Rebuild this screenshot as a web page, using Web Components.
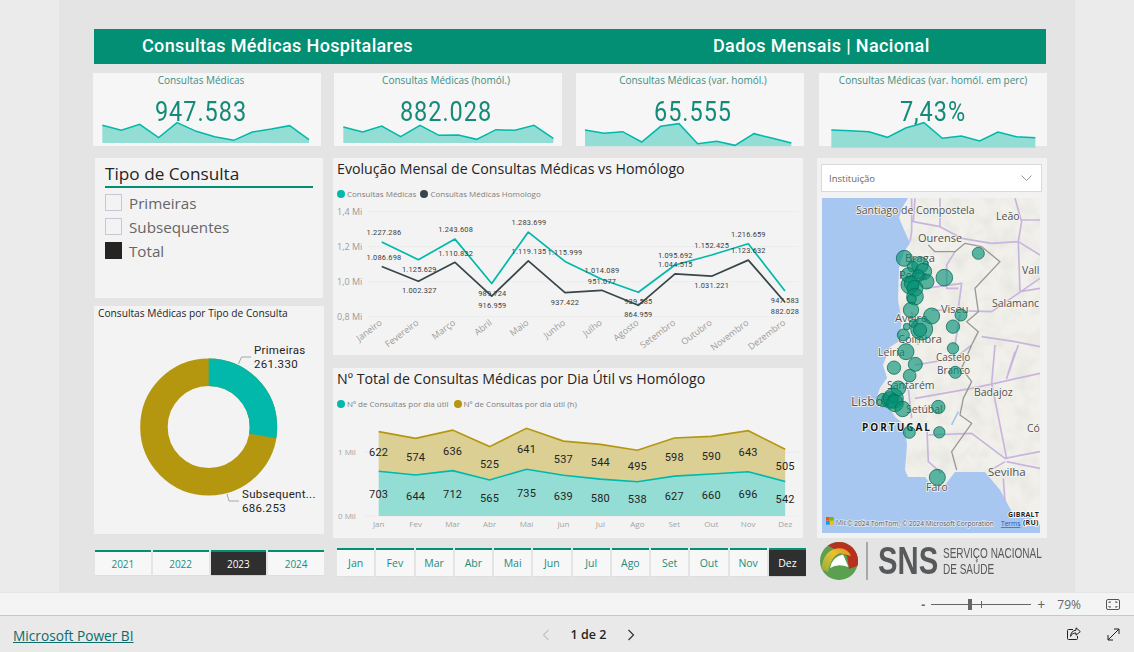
<!DOCTYPE html>
<html lang="pt">
<head>
<meta charset="utf-8">
<title>Consultas Médicas Hospitalares</title>
<style>
  html, body { margin: 0; padding: 0; background: #e9e9e9; }
  body { width: 1134px; height: 652px; overflow: hidden; font-family: "Open Sans", "Liberation Sans", sans-serif; }
</style>
</head>
<body>
<report-page>
  <report-header slot="header" left="Consultas Médicas Hospitalares" right="Dados Mensais | Nacional"></report-header>

  <kpi-card slot="kpi" value="947.583" left="10" bottom="368" shift="-6"
    spark="38,315 95,330 150,312 207,352 262,307 320,333 375,349 432,360 488,335 545,326 600,316 658,358">Consultas Médicas</kpi-card>
  <kpi-card slot="kpi" value="882.028" left="732" bottom="368" shift="-2"
    spark="760,320 818,335 875,317 932,349 990,315 1047,345 1105,344 1160,357 1218,328 1275,330 1332,315 1390,354">Consultas Médicas (homól.)</kpi-card>
  <kpi-card slot="kpi" value="65.555" left="18" bottom="378" shift="3"
    spark="45,329 102,339 158,334 215,365 272,318 327,310 383,370 440,363 495,375 552,340 608,354 664,368">Consultas Médicas (var. homól.)</kpi-card>
  <kpi-card slot="kpi" value="7,43%" left="748" bottom="382" shift="0"
    spark="785,329 842,331 898,334 953,351 1008,323 1063,307 1118,354 1175,347 1230,362 1285,335 1340,349 1397,352">Consultas Médicas (var. homól. em perc)</kpi-card>

  <type-slicer slot="left" items="Primeiras,Subsequentes,Total" active="Total">Tipo de Consulta</type-slicer>
  <donut-card slot="left">Consultas Médicas por Tipo de Consulta</donut-card>
  <button-slicer slot="left" items="2021,2022,2023,2024" active="2023" kind="year"></button-slicer>

  <line-card slot="middle">Evolução Mensal de Consultas Médicas vs Homólogo</line-card>
  <area-card slot="middle">Nº Total de Consultas Médicas por Dia Útil vs Homólogo</area-card>
  <button-slicer slot="middle" items="Jan,Fev,Mar,Abr,Mai,Jun,Jul,Ago,Set,Out,Nov,Dez" active="Dez" kind="month"></button-slicer>

  <map-card slot="right"></map-card>
  <sns-logo slot="right"></sns-logo>
</report-page>
<zoom-bar></zoom-bar>
<report-footer></report-footer>

<script>
const TEAL = '#01b8aa';
const GOLD = '#b5960f';
const DARK = '#374649';
const TEXT_FONT = '"Open Sans", "Liberation Sans", sans-serif';
const DIN_FONT = 'Roboto, "Liberation Sans", sans-serif';

class ReportPage extends HTMLElement {
  constructor() {
    super();
    this.attachShadow({ mode: 'open' });
  }
  connectedCallback() {
    this.shadowRoot.innerHTML = `
      <style>
        :host { display: block; width: 1134px; height: 592px; background: #ebebeb; }
        .canvas { box-sizing: border-box; width: 1016px; height: 592px; margin-left: 59px; padding: 29px 0 0 34px; background: #e4e4e4; }
        .kpis { display: grid; grid-template-columns: 241px 242px 243px 228px; margin: 9px 0 0 0; }
        .main { display: grid; grid-template-columns: 239px 484px 230px; margin: 12px 0 0 1px; }
        .col { display: flex; flex-direction: column; }
      </style>
      <div class="canvas">
        <slot name="header"></slot>
        <div class="kpis"><slot name="kpi"></slot></div>
        <div class="main">
          <div class="col"><slot name="left"></slot></div>
          <div class="col"><slot name="middle"></slot></div>
          <div class="col"><slot name="right"></slot></div>
        </div>
      </div>`;
  }
}

class ReportHeader extends HTMLElement {
  constructor() {
    super();
    this.attachShadow({ mode: 'open' });
  }
  connectedCallback() {
    this.shadowRoot.innerHTML = `
      <style>
        :host { display: grid; grid-template-columns: 571px 1fr; align-items: center; box-sizing: border-box; width: 952px; height: 35px; margin-left: 1px; padding: 0 0 2px 48px; background: #028f74; color: #fff; font: 500 18px ${DIN_FONT}; letter-spacing: .35px; white-space: nowrap; }
      </style>
      <span>${this.getAttribute('left')}</span>
      <span>${this.getAttribute('right')}</span>`;
  }
}

class KpiCard extends HTMLElement {
  constructor() {
    super();
    this.attachShadow({ mode: 'open' });
  }
  connectedCallback() {
    const left = Number(this.getAttribute('left'));
    const bottom = this.getAttribute('bottom');
    const shift = Number(this.getAttribute('shift'));
    const pts = this.getAttribute('spark').split(' ');
    const first = pts[0].split(',')[0];
    const last = pts[pts.length - 1].split(',')[0];
    this.shadowRoot.innerHTML = `
      <style>
        :host { display: block; position: relative; width: 228px; height: 73px; background: #f6f6f6; text-align: center; }
        .label { height: 16px; font: 10px/15px ${TEXT_FONT}; color: #3c8f84; white-space: nowrap; position: relative; left: ${shift}px; }
        .value { margin-top: 8px; font: 400 27px/30px ${DIN_FONT}; letter-spacing: 1.1px; color: #158a78; position: relative; left: ${shift}px; transform: scaleX(.87); }
        svg { position: absolute; left: 0; top: 0; overflow: visible; }
      </style>
      <svg width="228" height="73" viewBox="${left} 158 684 219">
        <polygon points="${first},${bottom} ${pts.join(' ')} ${last},${bottom}" fill="#93ddd5"/>
        <polyline points="${pts.join(' ')}" fill="none" stroke="${TEAL}" stroke-width="4.5"/>
      </svg>
      <div class="label"><slot></slot></div>
      <div class="value">${this.getAttribute('value')}</div>`;
  }
}

class TypeSlicer extends HTMLElement {
  constructor() {
    super();
    this.attachShadow({ mode: 'open' });
  }
  connectedCallback() {
    const active = this.getAttribute('active');
    const rows = this.getAttribute('items').split(',').map(name => `
      <div class="row"><span class="box ${name === active ? 'on' : ''}"></span><span>${name}</span></div>`).join('');
    this.shadowRoot.innerHTML = `
      <style>
        :host { display: block; box-sizing: border-box; width: 228px; height: 140px; margin-left: 1px; padding: 5px 10px 0 10px; background: #f3f3f3; }
        .title { height: 23px; border-bottom: 2px solid #028f74; font: 17.2px/22px ${TEXT_FONT}; color: #252423; white-space: nowrap; }
        .rows { margin-top: 3px; }
        .row { display: flex; align-items: center; gap: 7px; height: 24px; font: 15.2px/24px ${TEXT_FONT}; color: #666; }
        .box { box-sizing: border-box; width: 17px; height: 17px; border: 1px solid #c8c8d4; background: #f3f3f3; margin-top: -2px; }
        .box.on { background: #252423; border-color: #252423; }
      </style>
      <div class="title"><slot></slot></div>
      <div class="rows">${rows}</div>`;
  }
}

class DonutCard extends HTMLElement {
  constructor() {
    super();
    this.attachShadow({ mode: 'open' });
  }
  connectedCallback() {
    const r = 54.75;
    const c = 2 * Math.PI * r;
    const part = c * 261330 / (261330 + 686253);
    this.shadowRoot.innerHTML = `
      <style>
        :host { display: block; width: 230px; height: 228px; margin-top: 8px; background: #f3f3f3; }
        .title { height: 16px; padding-left: 4px; font: 10.2px/14px ${TEXT_FONT}; color: #252423; white-space: nowrap; }
        svg { display: block; }
        text { font: 11.5px ${DIN_FONT}; letter-spacing: .3px; fill: #252423; }
      </style>
      <div class="title"><slot></slot></div>
      <svg width="230" height="212" viewBox="94 322 230 212">
        <circle cx="208.7" cy="427" r="${r}" fill="none" stroke="${GOLD}" stroke-width="27.5"/>
        <circle cx="208.7" cy="427" r="${r}" fill="none" stroke="${TEAL}" stroke-width="27.5"
          stroke-dasharray="${part} ${c - part}" transform="rotate(-90 208.7 427)"/>
        <polyline points="238.5,364 241.5,357 251,357" fill="none" stroke="#a6a6a6"/>
        <polyline points="227,494 229,501 239,501" fill="none" stroke="#a6a6a6"/>
        <text x="254" y="354">Primeiras</text>
        <text x="254" y="368">261.330</text>
        <text x="242" y="498">Subsequent...</text>
        <text x="242" y="512">686.253</text>
      </svg>`;
  }
}

class ButtonSlicer extends HTMLElement {
  constructor() {
    super();
    this.attachShadow({ mode: 'open' });
  }
  connectedCallback() {
    const active = this.getAttribute('active');
    const month = this.getAttribute('kind') === 'month';
    const items = this.getAttribute('items').split(',');
    const cells = items.map(name => `<div class="cell ${name === active ? 'on' : ''}">${name}</div>`).join('');
    this.shadowRoot.innerHTML = `
      <style>
        :host { display: grid; grid-template-columns: repeat(${items.length}, 1fr); column-gap: 2px;
          margin: ${month ? '10px 0 0 4px' : '16px 0 0 1px'}; width: ${month ? 469 : 229}px; height: ${month ? 29 : 26}px; }
        .cell { box-sizing: border-box; border-top: 2px solid #028f74; background: #f7f7f7; color: #1c8c7c; display: flex; align-items: center; justify-content: center; font: ${month ? 10.5 : 10}px ${TEXT_FONT}; border-bottom: 1px solid #dedede; }
        .cell.on { background: #2f2f2f; color: #fff; border-bottom-color: #cfcfcf; }
      </style>${cells}`;
  }
}

class LineCard extends HTMLElement {
  constructor() {
    super();
    this.attachShadow({ mode: 'open' });
  }
  connectedCallback() {
    const a = [1227286, 1125629, 1243608, 989724, 1283699, 1115999, 1014089, 939585, 1095692, 1152425, 1216659, 947583];
    const b = [1086698, 1002327, 1110832, 916959, 1119135, 937422, 951077, 864959, 1044515, 1031221, 1123632, 882028];
    const months = ['Janeiro', 'Fevereiro', 'Março', 'Abril', 'Maio', 'Junho', 'Julho', 'Agosto', 'Setembro', 'Outubro', 'Novembro', 'Dezembro'];
    // label centres read off the report, in 3x crop units
    const labelX = [162, 268, 377, 487, 597, 705, 816, 925, 1036, 1145, 1255, 1365];
    const labelA = [230, 340, 220, 412, 200, 289, 343, 436, 299, 269, 235, 433];
    const labelB = [305, 403, 292, 448, 286, 439, 376, 475, 326, 388, 284, 466];
    const x = i => 381.7 + i * 36.66;
    const y = v => 315.7 - (v - 800000) / 1000000 * 175;
    const line = s => s.map((v, i) => `${x(i).toFixed(1)},${y(v).toFixed(1)}`).join(' ');
    const fmt = v => String(v).replace(/\B(?=(\d{3})+$)/g, '.');
    const grid = [[210.7, '1,4 Mi'], [245.7, '1,2 Mi'], [280.7, '1,0 Mi'], [315.7, '0,8 Mi']].map(([gy, t]) => `
      <line x1="368" x2="799" y1="${gy}" y2="${gy}" stroke="#ececec"/>
      <text class="axis" x="337" y="${gy + 3.5}">${t}</text>`).join('');
    const labels = s => s.map((v, i) => `<text class="val" text-anchor="middle" x="${330 + labelX[i] / 3}" y="${155 + ((s === a ? labelA : labelB)[i] + 8) / 3}">${fmt(v)}</text>`).join('');
    const ticks = months.map((m, i) => `<text class="axis" text-anchor="end" transform="translate(${x(i) + 1} 323) rotate(-37)">${m}</text>`).join('');
    this.shadowRoot.innerHTML = `
      <style>
        :host { display: block; width: 470px; height: 197px; background: #f3f3f3; }
        .title { height: 22px; padding: 1px 0 0 4px; font: 14.2px/20px ${TEXT_FONT}; color: #252423; white-space: nowrap; }
        .legend { display: flex; align-items: center; height: 13px; margin: 6px 0 0 4px; font: 8px/13px ${TEXT_FONT}; color: #7f7f7f; white-space: nowrap; }
        .dot { width: 8px; height: 8px; border-radius: 50%; margin: 0 2px 0 0; }
        .legend span + .dot { margin-left: 4px; }
        svg { display: block; }
        .axis { font: 9px ${TEXT_FONT}; fill: #9c9c9c; }
        .val { font: 7.4px ${DIN_FONT}; letter-spacing: .2px; fill: #3d3d3d; }
      </style>
      <div class="title"><slot></slot></div>
      <div class="legend">
        <i class="dot" style="background:${TEAL}"></i><span>Consultas Médicas</span>
        <i class="dot" style="background:${DARK}"></i><span>Consultas Médicas Homologo</span>
      </div>
      <svg width="470" height="156" viewBox="333 199 470 156">
        ${grid}
        <polyline points="${line(a)}" fill="none" stroke="${TEAL}" stroke-width="1.7" stroke-linejoin="round"/>
        <polyline points="${line(b)}" fill="none" stroke="${DARK}" stroke-width="1.7" stroke-linejoin="round"/>
        ${labels(a)}${labels(b)}${ticks}
      </svg>`;
  }
}

class AreaCard extends HTMLElement {
  constructor() {
    super();
    this.attachShadow({ mode: 'open' });
  }
  connectedCallback() {
    const a = [703, 644, 712, 565, 735, 639, 580, 538, 627, 660, 696, 542];
    const b = [622, 574, 636, 525, 641, 537, 544, 495, 598, 590, 643, 505];
    const months = ['Jan', 'Fev', 'Mar', 'Abr', 'Mai', 'Jun', 'Jul', 'Ago', 'Set', 'Out', 'Nov', 'Dez'];
    const labelA = [387, 393, 387, 399, 385, 392, 399, 401, 393, 390, 387, 401];
    const labelB = [261, 276, 258, 297, 252, 282, 291, 303, 276, 273, 261, 303];
    const x = i => 378.7 + i * 36.95;
    const y = v => 516 - v * 0.0637;
    const low = a.map((v, i) => `${x(i).toFixed(1)},${y(v).toFixed(1)}`);
    const high = a.map((v, i) => `${x(i).toFixed(1)},${y(v + b[i]).toFixed(1)}`);
    const nums = (s, ly) => s.map((v, i) => `<text class="val" text-anchor="middle" x="${x(i)}" y="${365 + (ly[i] + 12) / 3}">${v}</text>`).join('');
    this.shadowRoot.innerHTML = `
      <style>
        :host { display: block; width: 470px; height: 170px; margin-top: 13px; background: #f3f3f3; }
        .title { height: 21px; font: 14.2px/19px ${TEXT_FONT}; padding: 1px 0 0 4px; color: #252423; white-space: nowrap; }
        .legend { display: flex; align-items: center; height: 13px; margin: 7px 0 0 4px; font: 8px/13px ${TEXT_FONT}; color: #7f7f7f; white-space: nowrap; }
        .dot { width: 8px; height: 8px; border-radius: 50%; margin: 0 2px 0 0; }
        .legend span + .dot { margin-left: 5px; }
        svg { display: block; }
        .axis { font: 8px ${TEXT_FONT}; fill: #a3a3a3; }
        .val { font: 11px ${DIN_FONT}; letter-spacing: .2px; fill: #252423; }
      </style>
      <div class="title"><slot></slot></div>
      <div class="legend">
        <i class="dot" style="background:${TEAL}"></i><span>Nº de Consultas por dia útil</span>
        <i class="dot" style="background:${GOLD}"></i><span>Nº de Consultas por dia útil (h)</span>
      </div>
      <svg width="470" height="128" viewBox="333 410 470 128">
        <line x1="364" x2="799" y1="452.3" y2="452.3" stroke="#ececec"/>
        <line x1="364" x2="799" y1="516" y2="516" stroke="#ececec"/>
        <text class="axis" x="338" y="455">1 Mil</text>
        <text class="axis" x="338" y="519">0 Mil</text>
        <polygon points="${high.join(' ')} ${low.slice().reverse().join(' ')}" fill="#dbcf94"/>
        <polygon points="${low.join(' ')} ${x(11)},516 ${x(0)},516" fill="#93ddd5"/>
        <polyline points="${high.join(' ')}" fill="none" stroke="${GOLD}" stroke-width="1.6"/>
        <polyline points="${low.join(' ')}" fill="none" stroke="${TEAL}" stroke-width="1.6"/>
        ${nums(a, labelA)}${nums(b, labelB)}
        ${months.map((m, i) => `<text class="axis" text-anchor="middle" x="${x(i)}" y="527">${m}</text>`).join('')}
      </svg>`;
  }
}

class MapCard extends HTMLElement {
  constructor() {
    super();
    this.attachShadow({ mode: 'open' });
  }
  connectedCallback() {
    const north = [[268,310,24],[490,295,18],[315,330,25],[293,335,16],[325,350,25],[280,360,22],[335,380,22],[310,362,18],[388,368,25],
      [285,390,27],[290,385,22],[300,400,24],[300,425,25],[290,432,14],[288,465,23],[350,483,24],[438,480,18],[414,515,20],[320,522,33],[295,505,12],[315,525,20],[275,515,10],[265,540,18]];
    const south = [[273,20,24],[414,10,17],[301,58,21],[237,68,20],[284,92,19],[421,82,18],[250,130,22],[205,165,20],[225,165,25],[235,160,30],[235,160,14],[240,175,25],[263,192,23],[370,186,20],[283,262,18],[373,262,17],[367,397,24]];
    const dots = list => list.map(([cx, cy, r]) => `<circle cx="${cx}" cy="${cy}" r="${r}"/>`).join('');
    const labels = [
      ['Santiago de Compostela', 856, 214, 10.5], ['Leão', 996, 220, 10.5], ['Ourense', 918, 242, 11], ['Braga', 905, 262, 11],
      ['Porto', 899, 279, 11], ['Vall', 1022, 274, 10.5], ['Salamanc', 992, 307, 10.5], ['Viseu', 941, 313, 11], ['Aveiro', 895, 322, 11],
      ['Coimbra', 898, 343, 11], ['Leiria', 878, 356, 10.5], ['Castelo', 936, 361, 10], ['Branco', 937, 374, 10], ['Santarém', 887, 389, 10.5],
      ['Badajoz', 974, 396, 10.5], ['Lisboa', 851, 406, 13], ['Setúbal', 906, 413, 10.5], ['Có', 1027, 432, 10.5], ['Sevilha', 988, 476, 11.5], ['Faro', 926, 491, 10.5]
    ].map(([t, x, y, s]) => `<text class="place" x="${x}" y="${y}" style="font-size:${s}px">${t}</text>`).join('');
    const land = 'M908,198 L902,208 899,218 905,232 910,243 904,252 899,268 898,300 902,322 898,342 890,347 883,365 887,378 880,388 875,402 890,409 895,417 905,425 907,445 905,470 908,477 925,477 935,490 945,485 955,472 985,472 1000,490 1012,512 1030,517 1040,525 1040,198 Z';
    this.shadowRoot.innerHTML = `
      <style>
        :host { display: block; box-sizing: border-box; width: 230px; height: 380px; padding: 6px 0 0 4px; background: #f2f2f2; }
        .drop { box-sizing: border-box; display: flex; align-items: center; justify-content: space-between; width: 221px; height: 28px; padding: 0 9px 0 7px; background: #fff; border: 1px solid #d9d9d9; font: 9.5px ${TEXT_FONT}; color: #666; }
        svg.map { display: block; margin: 6px 0 0 1px; }
        .place { font-family: ${TEXT_FONT}; fill: #505050; stroke: #f5f5f0; stroke-width: 1.5px; paint-order: stroke; }
        .pt { font: bold 10px ${TEXT_FONT}; letter-spacing: 2px; fill: #111; stroke: #f5f5f0; stroke-width: 2px; paint-order: stroke; }
        .gib { font: bold 7px ${TEXT_FONT}; letter-spacing: .2px; fill: #222; stroke: #fff; stroke-width: 1.5px; paint-order: stroke; }
        .copy { font: 6.6px ${TEXT_FONT}; fill: #555; stroke: #dfe8f5; stroke-width: 1.5px; paint-order: stroke; }
        .terms { font: 6.6px ${TEXT_FONT}; fill: #2a50b8; text-decoration: underline; }
        .bubbles circle { fill: #008f72; fill-opacity: .62; stroke: #0a6f5a; stroke-width: 3; stroke-opacity: .8; }
      </style>
      <div class="drop"><span>Instituição</span>
        <svg width="11" height="6" viewBox="0 0 11 6"><path d="M.5.5 5.5 5.5 10.5.5" fill="none" stroke="#999"/></svg>
      </div>
      <svg class="map" width="218" height="335" viewBox="822 198 218 335">
        <defs>
          <filter id="terrain" x="0" y="0" width="100%" height="100%">
            <feTurbulence type="fractalNoise" baseFrequency=".06" numOctaves="3" seed="4"/>
            <feColorMatrix values="0 0 0 0 .55  0 0 0 0 .56  0 0 0 0 .5  0 0 0 .5 -.2"/>
            <feComposite in2="SourceGraphic" operator="in"/>
          </filter>
        </defs>
        <rect x="822" y="198" width="218" height="335" fill="#a7c6f0"/>
        <path d="${land}" fill="#f1f0eb"/>
        <path d="${land}" fill="#000" filter="url(#terrain)"/>
        <g transform="translate(815 155) scale(.3333)" fill="none" stroke-linejoin="round">
          <g stroke="#c8b5de" stroke-width="5">
            <path d="M290,130 L290,230 285,260 M300,130 L295,200 375,215 440,250 530,265 610,260 M600,130 L620,200 610,260 615,410 M675,195 L620,195 M375,215 L375,130 M610,260 L675,300"/>
            <path d="M420,290 L395,330 395,400 430,400 M330,400 L440,385 430,460 435,470 M350,465 L530,470 610,415 675,370 M500,545 L600,560 675,575 M435,480 L420,570 M290,470 L310,570 M675,400 L615,410"/>
          </g>
          <path d="M340,270 L360,290 420,290 450,265 500,275 555,320 480,400 490,470 455,500 490,530 470,570" stroke="#9a9a94" stroke-width="4"/>
        </g>
        <g transform="translate(815 345) scale(.3333)" fill="none" stroke-linejoin="round">
          <g stroke="#c8b5de" stroke-width="5">
            <path d="M300,60 L420,40 470,0 M280,130 L290,220 M300,160 L470,130 540,115 675,85 M540,0 L530,115 575,340 M600,20 L575,100 610,0"/>
            <path d="M335,230 L340,350 380,385 M340,270 L470,265 570,340 675,320 M570,350 L520,380 M575,350 L675,370 M565,400 L570,470"/>
          </g>
          <path d="M470,0 L440,70 470,110 445,160 435,210 470,235 410,320 425,375" stroke="#9a9a94" stroke-width="4"/>
          <path d="M300,200 L350,180 M430,200 L410,240" stroke="#a7c6f0" stroke-width="5"/>
        </g>
        ${labels}
        <text class="pt" x="862" y="431">PORTUGAL</text>
        <text class="gib" x="1008" y="517">GIBRALT</text>
        <text class="gib" x="1023" y="525">(RU)</text>
        <g class="bubbles">
          <g transform="translate(815 155) scale(.3333)">${dots(north)}</g>
          <g transform="translate(815 345) scale(.3333)">${dots(south)}</g>
        </g>
        <g>
          <rect x="826" y="517" width="3.7" height="3.7" fill="#f25022"/><rect x="830" y="517" width="3.7" height="3.7" fill="#7fba00"/>
          <rect x="826" y="521" width="3.7" height="3.7" fill="#00a4ef"/><rect x="830" y="521" width="3.7" height="3.7" fill="#ffb900"/>
        </g>
        <text class="copy" x="836" y="525" opacity=".8">Microsoft</text>
        <text class="copy" x="847" y="526">© 2024 TomTom, © 2024 Microsoft Corporation</text>
        <text class="terms" x="1001" y="526">Terms</text>
      </svg>`;
  }
}

class SnsLogo extends HTMLElement {
  constructor() {
    super();
    this.attachShadow({ mode: 'open' });
  }
  connectedCallback() {
    this.shadowRoot.innerHTML = `
      <style>
        :host { display: flex; align-items: center; height: 40px; margin: 3px 0 0 3px; color: #58595b; white-space: nowrap; }
        svg, .rule, .big, .small { flex: none; }
        .rule { width: 2px; height: 38px; margin: 0 10px 0 8px; background: #a8a8a8; }
        .big { width: 60px; font: bold 38px/40px "Liberation Sans", sans-serif; transform: scaleX(.77); transform-origin: left center; }
        .small { width: 97px; margin-left: 5px; font: 14.5px/16px "Liberation Sans", sans-serif; transform: scaleX(.69); transform-origin: left center; }
      </style>
      <svg width="38" height="38" viewBox="0 0 38 38">
        <defs><linearGradient id="sw" x1="0" x2="1" y1="1" y2="0"><stop offset="0" stop-color="#8fae3e"/><stop offset=".6" stop-color="#ecc02e"/><stop offset="1" stop-color="#e28b25"/></linearGradient></defs>
        <circle cx="19" cy="19" r="19" fill="#5b9f50"/>
        <path d="M8,3.6 A19,19 0 0 1 37.4,24 L29,27 27,14 Z" fill="#b7321e"/>
        <path d="M1.5,27 Q3,9 17,6.5 Q27,5 31,14 L20,11 Q11,14 8,30 Z" fill="url(#sw)"/>
        <path d="M10,26 Q12,15 23,12.5 L28.5,25 Q18,21 10,26 Z" fill="#fff"/>
      </svg>
      <i class="rule"></i>
      <span class="big">SNS</span>
      <span class="small">SERVIÇO NACIONAL<br>DE SAÚDE</span>`;
  }
}

class ZoomBar extends HTMLElement {
  constructor() {
    super();
    this.attachShadow({ mode: 'open' });
  }
  connectedCallback() {
    this.shadowRoot.innerHTML = `
      <style>
        :host { display: flex; align-items: center; justify-content: flex-end; box-sizing: border-box; height: 24px; padding-right: 14px; background: #f4f4f4; border-top: 1px solid #e4e4e4; border-bottom: 1px solid #c8c8c8; font: 12px ${TEXT_FONT}; color: #666; }
        .minus { font-weight: 700; width: 8px; }
        .track { position: relative; width: 100px; height: 1px; margin: 0 6px 0 2px; background: #666; }
        .thumb { position: absolute; left: 37px; top: -5px; width: 4px; height: 11px; background: #666; }
        .tick { position: absolute; left: 50px; top: -3px; width: 1px; height: 7px; background: #666; }
        .plus { width: 11px; font-size: 14px; }
        .pct { margin: 0 25px 0 9px; }
      </style>
      <span class="minus">-</span>
      <div class="track"><i class="tick"></i><i class="thumb"></i></div>
      <span class="plus">+</span>
      <span class="pct">79%</span>
      <svg width="14" height="11" viewBox="0 0 14 11" fill="none" stroke="#555">
        <rect x=".5" y=".5" width="13" height="10" rx="1.5"/>
        <path d="M3 4V3H5M9 3h2V4M11 7V8H9M5 8H3V7"/>
      </svg>`;
  }
}

class ReportFooter extends HTMLElement {
  constructor() {
    super();
    this.attachShadow({ mode: 'open' });
  }
  connectedCallback() {
    this.shadowRoot.innerHTML = `
      <style>
        :host { display: grid; grid-template-columns: 529px 93px 1fr; align-items: center; height: 36px; padding-left: 13px; background: #e9e9e9; }
        a { font: 13.7px ${TEXT_FONT}; color: #0f6b6b; text-decoration: underline; white-space: nowrap; padding-top: 2px; }
        .pager { display: flex; align-items: center; justify-content: space-between; font: 600 12.5px ${TEXT_FONT}; color: #252423; padding-top: 1px; }
        .icons { display: flex; justify-content: flex-end; align-items: center; gap: 26px; padding-right: 14px; }
      </style>
      <a>Microsoft Power BI</a>
      <div class="pager">
        <svg width="8" height="12" viewBox="0 0 8 12"><path d="M6.5 1 1.5 6 6.5 11" fill="none" stroke="#c4c4c4" stroke-width="1.2"/></svg>
        <span>1 de 2</span>
        <svg width="8" height="12" viewBox="0 0 8 12"><path d="M1.5 1 6.5 6 1.5 11" fill="none" stroke="#333" stroke-width="1.2"/></svg>
      </div>
      <div class="icons">
        <svg width="14" height="14" viewBox="0 0 14 14" fill="none" stroke="#222"><path d="M6 2.5H1.5a1 1 0 0 0-1 1v8a1 1 0 0 0 1 1h8a1 1 0 0 0 1-1V9"/><path d="M9 .8 13.3 4.6 9 8.2V6C6.5 6 4.6 7 3.6 9.4 3.6 6 5.6 3.4 9 3.2Z"/></svg>
        <svg width="13" height="13" viewBox="0 0 13 13" fill="none" stroke="#222"><path d="M1 12 12 1M7 1h5v5M1 7v5h5"/></svg>
      </div>`;
  }
}

customElements.define('report-page', ReportPage);
customElements.define('report-header', ReportHeader);
customElements.define('kpi-card', KpiCard);
customElements.define('type-slicer', TypeSlicer);
customElements.define('donut-card', DonutCard);
customElements.define('button-slicer', ButtonSlicer);
customElements.define('line-card', LineCard);
customElements.define('area-card', AreaCard);
customElements.define('map-card', MapCard);
customElements.define('sns-logo', SnsLogo);
customElements.define('zoom-bar', ZoomBar);
customElements.define('report-footer', ReportFooter);
</script>
</body>
</html>
